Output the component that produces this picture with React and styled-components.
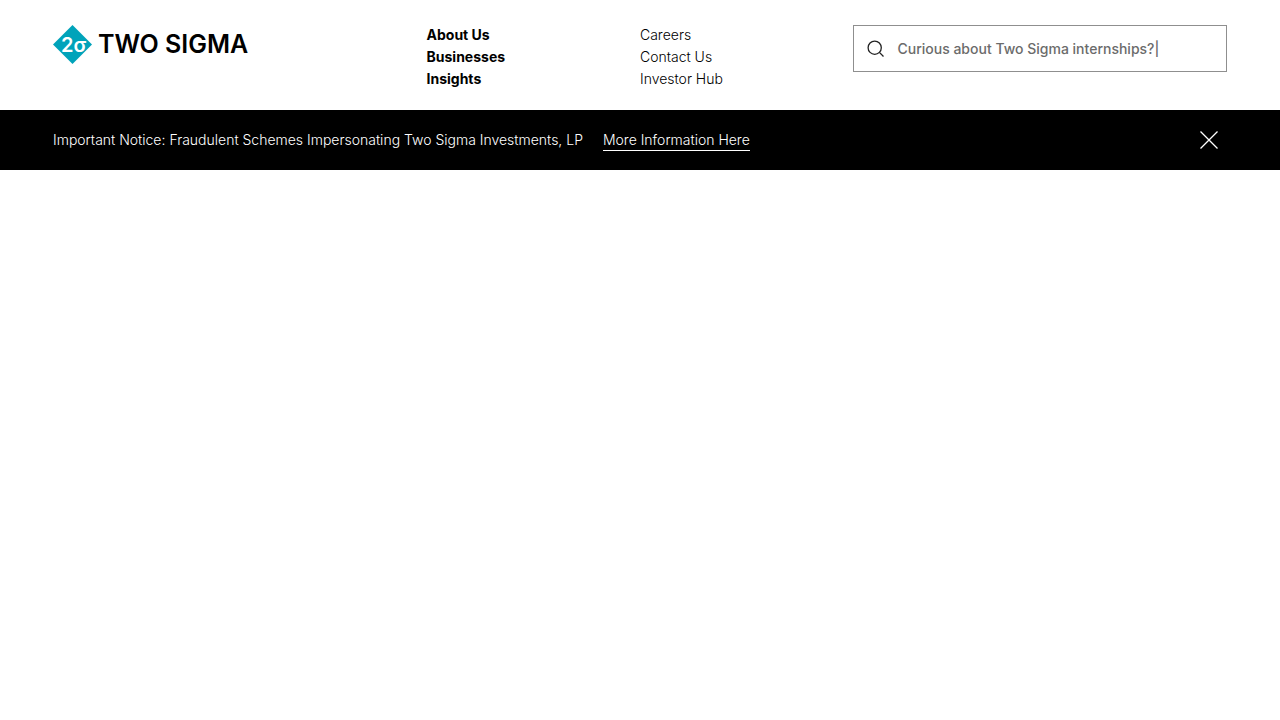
import React, { useState } from 'react';
import styled, { createGlobalStyle } from 'styled-components';

const GlobalStyle = createGlobalStyle`
  * {
    box-sizing: border-box;
  }
  body {
    margin: 0;
    background: #fff;
    color: #000;
    font-family: Inter, 'Liberation Sans', sans-serif;
    font-size: 14px;
    line-height: 22px;
  }
`;

const Header = styled.header`
  display: grid;
  grid-template-columns: 7fr 4fr 4fr 7fr;
  align-items: start;
  padding: 24px 53px 20px;
`;

const LogoLink = styled.a`
  display: flex;
  align-items: center;
  gap: 6px;
  padding-top: 1px;
  color: #000;
  text-decoration: none;
`;

const Wordmark = styled.span`
  font-size: 25px;
  font-weight: 600;
  line-height: 39px;
  white-space: nowrap;
`;

const NavList = styled.ul`
  margin: 0;
  padding: 0;
  list-style: none;
`;

const NavLink = styled.a`
  color: #000;
  font-weight: ${(props) => (props.$primary ? 700 : 300)};
  text-decoration: none;
`;

const SearchForm = styled.form`
  display: flex;
  align-items: center;
  gap: 11px;
  height: 47px;
  margin-top: 1px;
  padding: 0 12px;
  border: 1px solid #8f8f8f;
`;

const SearchButton = styled.button`
  display: flex;
  padding: 0;
  border: 0;
  background: none;
  cursor: pointer;
`;

const SearchInput = styled.input`
  flex: 1;
  min-width: 0;
  padding: 0;
  border: 0;
  outline: 0;
  background: none;
  font: inherit;
  font-weight: 500;

  &::placeholder {
    color: #6b6b6b;
    opacity: 1;
  }
`;

const Notice = styled.section`
  display: flex;
  align-items: center;
  gap: 20px;
  min-height: 60px;
  padding: 0 53px;
  background: #000;
  color: #fff;
  font-weight: 300;
`;

const NoticeText = styled.p`
  margin: 0;
`;

const NoticeLink = styled.a`
  border-bottom: 1px solid #fff;
  color: #fff;
  line-height: 20px;
  text-decoration: none;
`;

const CloseButton = styled.button`
  display: flex;
  margin-left: auto;
  padding: 8px;
  border: 0;
  background: none;
  color: #fff;
  cursor: pointer;
`;

const primaryLinks = ['About Us', 'Businesses', 'Insights'];
const secondaryLinks = ['Careers', 'Contact Us', 'Investor Hub'];

const App = () => {
  const [query, setQuery] = useState('');
  const [showNotice, setShowNotice] = useState(true);

  return (
    <>
      <GlobalStyle />
      <Header>
        <LogoLink href="#home">
          <svg width="39" height="39" viewBox="0 0 39 39" aria-hidden="true">
            <path d="M19.5 0L39 19.5L19.5 39L0 19.5Z" fill="#00a3ba" />
            <text x="8" y="27" fill="#fff" fontFamily="Inter, sans-serif" fontSize="20" fontWeight="600">2σ</text>
          </svg>
          <Wordmark>TWO SIGMA</Wordmark>
        </LogoLink>
        <nav aria-label="Primary">
          <NavList>
            {primaryLinks.map((label) => (
              <li key={label}>
                <NavLink href="#" $primary>{label}</NavLink>
              </li>
            ))}
          </NavList>
        </nav>
        <nav aria-label="Secondary">
          <NavList>
            {secondaryLinks.map((label) => (
              <li key={label}>
                <NavLink href="#">{label}</NavLink>
              </li>
            ))}
          </NavList>
        </nav>
        <SearchForm role="search" onSubmit={(e) => e.preventDefault()}>
          <SearchButton type="submit" aria-label="Search">
            <svg width="20" height="20" viewBox="0 0 20 20" fill="none" stroke="#222" strokeWidth="1.3">
              <circle cx="8.7" cy="8.7" r="6.6" />
              <path d="M13.4 13.4L17.5 17.5" />
            </svg>
          </SearchButton>
          <SearchInput
            type="text"
            aria-label="Search Two Sigma"
            placeholder="Curious about Two Sigma internships?|"
            value={query}
            onChange={(e) => setQuery(e.target.value)}
          />
        </SearchForm>
      </Header>
      {showNotice && (
        <Notice>
          <NoticeText>Important Notice: Fraudulent Schemes Impersonating Two Sigma Investments, LP</NoticeText>
          <NoticeLink href="#">More Information Here</NoticeLink>
          <CloseButton type="button" aria-label="Close" onClick={() => setShowNotice(false)}>
            <svg width="20" height="20" viewBox="0 0 20 20" fill="none" stroke="currentColor" strokeWidth="1.3">
              <path d="M1.5 1.5L18.5 18.5M18.5 1.5L1.5 18.5" />
            </svg>
          </CloseButton>
        </Notice>
      )}
    </>
  );
};

export default App;
